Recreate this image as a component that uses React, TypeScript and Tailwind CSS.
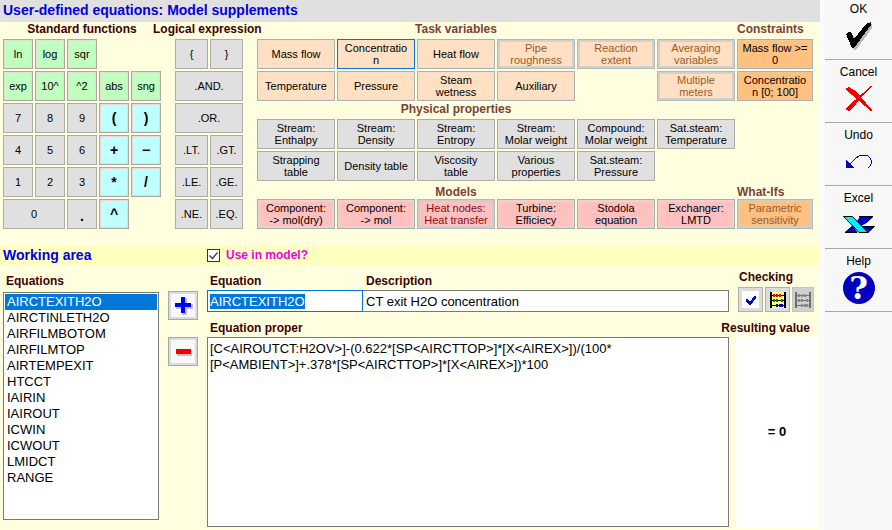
import { useEffect, useRef, useState, type ReactNode } from "react";
import clsx from "clsx";

type Tone = "peach" | "peachOff" | "orange" | "orangeOff" | "gray" | "pink" | "pinkOff" | "green" | "cyan";

const TONES: Record<Tone, string> = {
  peach: "bg-[#ffe0c2] border-[#a9b0b0] text-black shadow-[inset_0_0_0_1px_#f3dfcc]",
  peachOff: "bg-[#ffe0c2] border-[#b4bab8] text-[#9a5a2c] shadow-[inset_0_0_0_2px_#d2d0cc]",
  orange: "bg-[#ffc080] border-[#a9b0b0] text-black shadow-[inset_0_0_0_1px_#f6c594]",
  orangeOff: "bg-[#ffc080] border-[#b4bab8] text-[#9a5a2c] shadow-[inset_0_0_0_2px_#d2ccc4]",
  gray: "bg-[#e0e0e0] border-[#adada5] text-black",
  pink: "bg-[#ffc0c0] border-[#a9b0a8] text-black shadow-[inset_0_0_0_2px_#eed0cc]",
  pinkOff: "bg-[#ffc0c0] border-[#b4bab8] text-[#8c0c14] shadow-[inset_0_0_0_2px_#d2ccca]",
  green: "bg-[#c0ffc0] border-[#b0a89e] text-black shadow-[inset_0_0_0_1px_#d8e4d0]",
  cyan: "bg-[#c0ffff] border-[#b0a89e] text-black shadow-[inset_0_0_0_1px_#e4dcdc]",
};

type KeyDef = { t: string; tone?: Tone; cls?: string; focus?: boolean };

function Key({ t, tone = "gray", cls, focus }: KeyDef) {
  return (
    <button
      type="button"
      disabled={tone.endsWith("Off")}
      className={clsx(
        "h-[30px] min-w-0 border text-center leading-3 whitespace-pre-line",
        cls?.includes("font-bold") ? "text-sm" : "text-[11px]",
        TONES[tone],
        focus && "border-[#0078d7]!",
        cls,
      )}
    >
      {t}
    </button>
  );
}

const KEYPAD: KeyDef[] = [
  { t: "ln", tone: "green" },
  { t: "log", tone: "green" },
  { t: "sqr", tone: "green" },
  { t: "exp", tone: "green", cls: "col-start-1" },
  { t: "10^", tone: "green" },
  { t: "^2", tone: "green" },
  { t: "abs", tone: "green" },
  { t: "sng", tone: "green" },
  { t: "7" },
  { t: "8" },
  { t: "9" },
  { t: "(", tone: "cyan", cls: "font-bold" },
  { t: ")", tone: "cyan", cls: "font-bold" },
  { t: "4" },
  { t: "5" },
  { t: "6" },
  { t: "+", tone: "cyan", cls: "font-bold" },
  { t: "−", tone: "cyan", cls: "font-bold" },
  { t: "1" },
  { t: "2" },
  { t: "3" },
  { t: "*", tone: "cyan", cls: "font-bold" },
  { t: "/", tone: "cyan", cls: "font-bold" },
  { t: "0", cls: "col-span-2" },
  { t: ".", cls: "font-bold pt-1" },
  { t: "^", tone: "cyan", cls: "font-bold" },
];

const LOGICAL: KeyDef[] = [
  { t: "{" },
  { t: "}" },
  { t: ".AND.", cls: "col-span-2" },
  { t: ".OR.", cls: "col-span-2" },
  { t: ".LT." },
  { t: ".GT." },
  { t: ".LE." },
  { t: ".GE." },
  { t: ".NE." },
  { t: ".EQ." },
];

const TASK: KeyDef[] = [
  { t: "Mass flow", tone: "peach" },
  { t: "Concentratio\nn", tone: "peach", focus: true },
  { t: "Heat flow", tone: "peach" },
  { t: "Pipe\nroughness", tone: "peachOff" },
  { t: "Reaction\nextent", tone: "peachOff" },
  { t: "Averaging\nvariables", tone: "peachOff" },
  { t: "Mass flow >=\n0", tone: "orange" },
  { t: "Temperature", tone: "peach" },
  { t: "Pressure", tone: "peach" },
  { t: "Steam\nwetness", tone: "peach" },
  { t: "Auxiliary", tone: "peach" },
  { t: "Multiple\nmeters", tone: "peachOff", cls: "col-start-6" },
  { t: "Concentratio\nn [0; 100]", tone: "orange" },
];

const PHYSICAL: KeyDef[] = [
  { t: "Stream:\nEnthalpy" },
  { t: "Stream:\nDensity" },
  { t: "Stream:\nEntropy" },
  { t: "Stream:\nMolar weight" },
  { t: "Compound:\nMolar weight" },
  { t: "Sat.steam:\nTemperature" },
  { t: "Strapping\ntable", cls: "col-start-1" },
  { t: "Density table" },
  { t: "Viscosity\ntable" },
  { t: "Various\nproperties" },
  { t: "Sat.steam:\nPressure" },
];

const MODELS: KeyDef[] = [
  { t: "Component:\n-> mol(dry)", tone: "pink" },
  { t: "Component:\n-> mol", tone: "pink" },
  { t: "Heat nodes:\nHeat transfer", tone: "pinkOff" },
  { t: "Turbine:\nEfficiecy", tone: "pink" },
  { t: "Stodola\nequation", tone: "pink" },
  { t: "Exchanger:\nLMTD", tone: "pink" },
  { t: "Parametric\nsensitivity", tone: "orangeOff" },
];

const EQUATIONS = [
  "AIRCTEXITH2O",
  "AIRCTINLETH2O",
  "AIRFILMBOTOM",
  "AIRFILMTOP",
  "AIRTEMPEXIT",
  "HTCCT",
  "IAIRIN",
  "IAIROUT",
  "ICWIN",
  "ICWOUT",
  "LMIDCT",
  "RANGE",
];

const GRID7 = "grid grid-cols-[repeat(6,minmax(0,78fr))_minmax(0,76fr)] gap-0.5";
const HEAD = "text-xs font-bold text-[#7c4038] whitespace-nowrap";
const LABEL = "text-xs font-bold text-[#400000] whitespace-nowrap";

function GroupHead({ title, side, cls }: { title: string; side?: string; cls: string }) {
  return (
    <div className={clsx(GRID7, cls)}>
      <h2 className={clsx(HEAD, "col-span-5 text-center leading-[inherit]")}>{title}</h2>
      {side && <h2 className={clsx(HEAD, "col-start-7 leading-[inherit]")}>{side}</h2>}
    </div>
  );
}

function CheckIcon() {
  return (
    <svg width="28" height="30" viewBox="0 0 28 30" shapeRendering="crispEdges" aria-hidden="true">
      <path d="M3 16l3-2 3 1 2 5L23 5l4-2v4L11 29 9 29z" fill="#b8b8b8" />
      <path d="M1 13l3-2 3 1 2 6L21 3l5-2v3L9 27 7 27z" fill="#000" />
    </svg>
  );
}

function CancelIcon() {
  return (
    <svg width="28" height="26" viewBox="0 0 28 26" shapeRendering="crispEdges" aria-hidden="true">
      <path d="M1 2l3-1 5 3 6 6 12 14-1 1L13 14 7 9 1 4z" fill="#f00000" />
      <path d="M27 1l-9 8-7 9-6 7-4-1 0-2 9-8L26 0z" fill="#f00000" />
    </svg>
  );
}

function UndoIcon() {
  return (
    <svg width="28" height="16" viewBox="0 0 28 16" shapeRendering="crispEdges" aria-hidden="true">
      <path d="M1 6v8h8z" fill="#0000c0" />
      <path d="M5 10L11 4q3-3 7-3 5 0 7 3 3 4 0 8l-2 2" fill="none" stroke="#0000c0" />
    </svg>
  );
}

function ExcelIcon() {
  return (
    <svg width="32" height="17" viewBox="0 0 32 17" aria-hidden="true">
      <path d="M17 .5h13L22 8l-7 3-6 5.500H2.500L12 8z" fill="#0000d8" />
      <path d="M18 10.500h13.500L25 16.500h-6z" fill="#0000d8" stroke="#000" />
      <path d="M2 16.500l7-6 5 6zM16 .5h14L23 7" fill="#0000d8" stroke="#000" />
      <path d="M.5.5h9L25 16.500h-9z" fill="#00f0f0" stroke="#000" />
    </svg>
  );
}

function HelpIcon() {
  return (
    <span className="flex size-8 items-center justify-center rounded-full bg-[#0000c0] font-['DejaVu_Serif',serif] text-[32px] leading-none font-bold text-white">
      ?
    </span>
  );
}

function Abacus({ off }: { off?: boolean }) {
  const frame = off ? "#707070" : "#000";
  const beads = off ? ["#8a8a8a", "#8a8a8a", "#8a8a8a"] : ["#f00000", "#008000", "#0000c0"];
  return (
    <svg width="16" height="16" viewBox="0 0 16 16" shapeRendering="crispEdges" aria-hidden="true">
      {!off && <rect width="16" height="16" fill="#ffff80" />}
      {[3, 8, 13].map((y, i) => (
        <g key={y}>
          <path d={`M0 ${y}.5H16`} stroke={frame} />
          <path
            d={`M${i === 2 ? 6 : 3} ${y - 1}h2v3h-2zM${i === 2 ? 9 : 6} ${y - 1}h2v3h-2zM${i === 0 ? 9 : 11} ${y - 1}h2v3h-2z`}
            fill={beads[i]}
          />
        </g>
      ))}
      <path d="M0 0h2v16H0zM14 0h2v16h-2z" fill={frame} />
    </svg>
  );
}

function SideButton({ label, first, children }: { label: string; first?: boolean; children: ReactNode }) {
  return (
    <button
      type="button"
      className={clsx(
        "flex w-full flex-col items-center border-b border-[#a8a8a8] pb-1.5",
        first ? "h-[60px]" : "h-[63px] pt-[3px]",
      )}
    >
      <span className="text-xs leading-[18px]">{label}</span>
      <span className="flex flex-1 items-center justify-center">{children}</span>
    </button>
  );
}

export default function App() {
  const nameRef = useRef<HTMLInputElement>(null);
  const [selected, setSelected] = useState("AIRCTEXITH2O");

  useEffect(() => {
    nameRef.current?.focus();
    nameRef.current?.select();
  }, []);

  return (
    <div className="flex min-h-screen bg-[#fbfbfb] font-['Liberation_Sans',Arial,sans-serif] text-black">
      <main className="flex min-w-0 flex-1 flex-col bg-[#ffffe0]">
        <h1 className="h-[22px] bg-[#e0e0e0] pl-[3px] text-sm leading-[21px] font-bold text-[#0000e0]">
          User-defined equations: Model supplements
        </h1>

        <div className="flex pr-[7px] pl-[3px]">
          <section className="mr-3.5 shrink-0">
            <h2 className={clsx(LABEL, "h-[17px] text-center leading-[15px]")}>Standard functions</h2>
            <div className="grid grid-cols-[repeat(5,30px)] gap-0.5">
              {KEYPAD.map((k) => (
                <Key key={k.t} {...k} />
              ))}
            </div>
          </section>

          <section className="mr-3.5 w-[68px] shrink-0">
            <h2 className={clsx(LABEL, "-mr-3.5 -ml-[22px] h-[17px] leading-[15px]")}>Logical expression</h2>
            <div className="grid grid-cols-2 gap-0.5">
              {LOGICAL.map((k) => (
                <Key key={k.t} {...k} />
              ))}
            </div>
          </section>

          <section className="min-w-0 flex-1">
            <GroupHead title="Task variables" side="Constraints" cls="h-[17px] leading-[15px]" />
            <div className={GRID7}>
              {TASK.map((k) => (
                <Key key={k.t} {...k} />
              ))}
            </div>
            <GroupHead title="Physical properties" cls="h-[18px] leading-[17px]" />
            <div className={GRID7}>
              {PHYSICAL.map((k) => (
                <Key key={k.t} {...k} />
              ))}
            </div>
            <GroupHead title="Models" side="What-Ifs" cls="h-[18px] leading-[22px]" />
            <div className={GRID7}>
              {MODELS.map((k) => (
                <Key key={k.t} {...k} />
              ))}
            </div>
          </section>
        </div>

        <div className="mt-4 flex h-5 items-center bg-[#ffffc0] pl-[3px]">
          <h2 className="w-[204px] text-sm font-bold text-[#0000e0]">Working area</h2>
          <label className="flex items-center gap-1.5 text-xs font-bold text-[#f000e0]">
            <span className="grid size-[13px] place-items-center">
              <input
                type="checkbox"
                defaultChecked
                className="peer col-start-1 row-start-1 size-[13px] appearance-none border border-[#333] bg-white"
              />
              <svg
                viewBox="0 0 13 13"
                className="pointer-events-none col-start-1 row-start-1 size-[13px] opacity-0 peer-checked:opacity-100"
                aria-hidden="true"
              >
                <path d="M2.5 6.5l3 3 5-6" fill="none" stroke="#333" strokeWidth="1.2" />
              </svg>
            </span>
            Use in model?
          </label>
        </div>

        <div className="flex flex-1 pr-0.5 pb-[3px] pl-[3px]">
          <div className="flex w-[156px] shrink-0 flex-col pb-[7px]">
            <label htmlFor="equations" className={clsx(LABEL, "h-[27px] pl-[3px] leading-[32px]")}>
              Equations
            </label>
            <select
              id="equations"
              size={12}
              value={selected}
              onChange={(e) => setSelected(e.target.value)}
              className="flex-1 appearance-none overflow-hidden border border-[#7a7a70] bg-white p-px text-[13px] outline-none"
            >
              {EQUATIONS.map((name) => (
                <option
                  key={name}
                  className="h-4 min-h-4 px-0.5 py-0 leading-4 checked:bg-[linear-gradient(#0078d7,#0078d7)] checked:[-webkit-text-fill-color:#fff]"
                >
                  {name}
                </option>
              ))}
            </select>
          </div>

          <div className="mx-[9px] flex w-[30px] shrink-0 flex-col gap-[17px] pt-[26px]">
            <button
              type="button"
              aria-label="Add equation"
              className="grid h-[29px] place-items-center border border-[#a8a8a8] bg-[#f8f8f8] shadow-[inset_0_0_0_2px_#dcdcdc]"
            >
              <svg width="19" height="19" viewBox="0 0 19 19" shapeRendering="crispEdges" aria-hidden="true">
                <path d="M8 2h5v6h6v5h-6v6H8v-6H2V8h6z" fill="#c0c0c0" />
                <path d="M7 1h4v6h6v4h-6v6H7v-6H1V7h6z" fill="#0000f0" />
              </svg>
            </button>
            <button
              type="button"
              aria-label="Remove equation"
              className="grid h-[29px] place-items-center border border-[#a8a8a8] bg-[#f8f8f8] shadow-[inset_0_0_0_2px_#dcdcdc]"
            >
              <svg width="17" height="8" viewBox="0 0 17 8" shapeRendering="crispEdges" aria-hidden="true">
                <path d="M2 2h15v6H2z" fill="#c0c0c0" />
                <path d="M1 1h15v5H1z" fill="#f00000" />
              </svg>
            </button>
          </div>

          <div className="flex min-w-0 flex-1 flex-col">
            <div className="flex">
              <div className="flex w-[156px] shrink-0 flex-col">
                <label htmlFor="name" className={clsx(LABEL, "h-[25px] pl-[3px] leading-[32px]")}>
                  Equation
                </label>
                <input
                  id="name"
                  ref={nameRef}
                  defaultValue="AIRCTEXITH2O"
                  className="h-[22px] w-full border border-[#0078d7] bg-white px-0.5 text-[13px] outline-none selection:bg-[#0078d7] selection:text-white"
                />
              </div>
              <div className="flex min-w-0 flex-1 flex-col">
                <label htmlFor="description" className={clsx(LABEL, "h-[25px] pl-[3px] leading-[32px]")}>
                  Description
                </label>
                <input
                  id="description"
                  defaultValue="CT exit H2O concentration"
                  className="h-[22px] w-full border border-l-0 border-[#7a7a70] bg-white px-[3px] text-[13px] outline-none"
                />
              </div>
            </div>
            <label htmlFor="body" className={clsx(LABEL, "h-[25px] pl-[3px] leading-[32px]")}>
              Equation proper
            </label>
            <textarea
              id="body"
              spellCheck={false}
              defaultValue={
                "[C<AIROUTCT:H2OV>]-(0.622*[SP<AIRCTTOP>]*[X<AIREX>])/(100*\n[P<AMBIENT>]+.378*[SP<AIRCTTOP>]*[X<AIREX>])*100"
              }
              className="w-full flex-1 resize-none border border-[#7a7a70] bg-white px-0.5 py-[3px] text-[13px] leading-4 outline-none"
            />
          </div>

          <div className="ml-[7px] flex w-[82px] shrink-0 flex-col">
            <h3 className={clsx(LABEL, "h-[22px] pl-[3px] leading-6")}>Checking</h3>
            <div className="flex h-[25px] gap-0.5 pl-0.5">
              <button
                type="button"
                aria-label="Check equation"
                className="grid w-[25px] place-items-center border border-[#b0b0b0] bg-[#dcdcdc]"
              >
                <svg width="17" height="17" viewBox="0 0 17 17" shapeRendering="crispEdges" aria-hidden="true">
                  <rect width="17" height="17" fill="#fff" />
                  <path d="M4 8h2l2 3 4-6h2v2l-5 7H7L4 10z" fill="#0000d0" />
                </svg>
              </button>
              <button
                type="button"
                aria-label="Calculate"
                className="grid w-[25px] place-items-center border border-[#b0b0b0] bg-[#dcdcdc]"
              >
                <Abacus />
              </button>
              <button
                type="button"
                disabled
                aria-label="Calculate all"
                className="grid w-[22px] place-items-center border border-[#c4c4c4] bg-[#d0d0d0]"
              >
                <Abacus off />
              </button>
            </div>
            <h3 className={clsx(LABEL, "flex h-[25px] justify-end pr-2 leading-[32px]")}>Resulting value</h3>
            <output className="flex flex-1 items-center justify-center bg-white text-[13px] font-bold">= 0</output>
          </div>
        </div>
      </main>

      <aside className="ml-[5px] w-[67px] shrink-0 bg-[#f7f7f7]">
        <SideButton label="OK" first>
          <CheckIcon />
        </SideButton>
        <SideButton label="Cancel">
          <CancelIcon />
        </SideButton>
        <SideButton label="Undo">
          <UndoIcon />
        </SideButton>
        <SideButton label="Excel">
          <ExcelIcon />
        </SideButton>
        <SideButton label="Help">
          <HelpIcon />
        </SideButton>
      </aside>
    </div>
  );
}
